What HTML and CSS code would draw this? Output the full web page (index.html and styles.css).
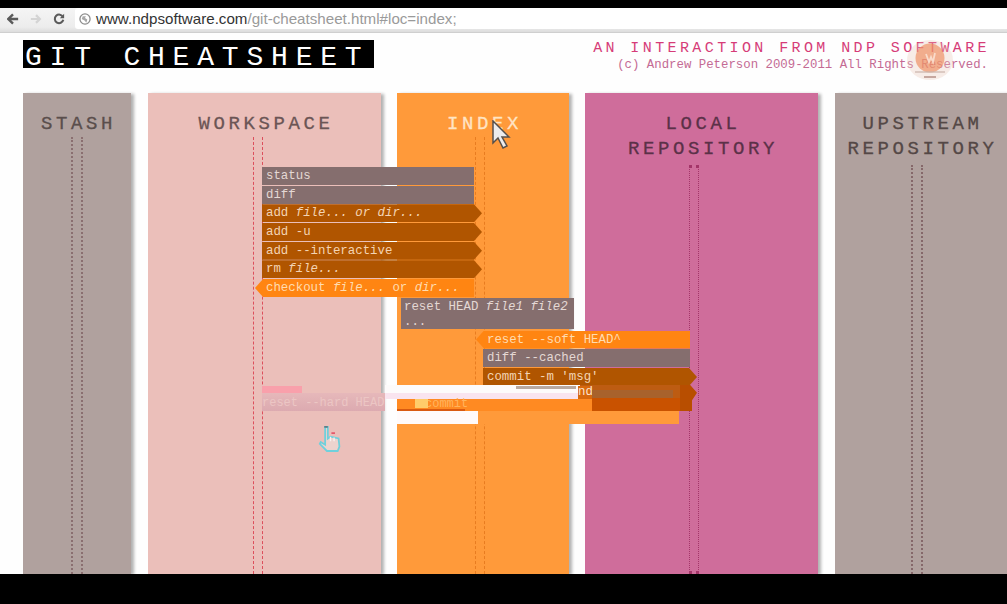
FILE: index.html
```html
<!doctype html>
<html lang="en">
    <head>
        <meta charset="UTF-8" />
        <meta name="viewport" content="width=device-width, initial-scale=1.0" />
        <title>Git Cheatsheet</title>
        <link rel="stylesheet" href="styles.css">
    </head>
    <body>
        <div class="screen">
            <div class="toolbar">
                <svg class="nav-icon" width="12" height="12" viewBox="0 0 14 14"><path d="M7 1.5 1.5 7 7 12.5M2 7h11" fill="none" stroke="#5a5a5a" stroke-width="2.8"/></svg>
                <svg class="nav-icon" width="12" height="12" viewBox="0 0 14 14"><path d="M7 2.5 11.5 7 7 11.500M1 7h10" fill="none" stroke="#d4d4d4" stroke-width="2.6"/></svg>
                <svg class="nav-icon" width="12" height="12" viewBox="0 0 14 14"><path d="M11.6 4.6A5 5 0 1 0 12 8" fill="none" stroke="#5a5a5a" stroke-width="2.4"/><path d="M13 1v5H8z" fill="#5a5a5a"/></svg>
                <div class="address">
                    <svg class="globe" width="12" height="12" viewBox="0 0 13 13"><circle cx="6.5" cy="6.5" r="5.5" fill="none" stroke="#8c8c8c" stroke-width="1.4"/><path d="M4 3.5h3.500l-1 2 2.500 1.500-1 3.500-2-2.500L3 6.500z" fill="#a8a8a8"/></svg>
                    <span class="domain">www.ndpsoftware.com</span><span class="path">/git-cheatsheet.html#loc=index;</span>
                </div>
            </div>

            <header class="page-head">
                <h1 class="logo">GIT CHEATSHEET</h1>
                <div class="credits">
                    <div class="tagline">AN INTERACTION FROM NDP SOFTWARE</div>
                    <div class="copyright">(c) Andrew Peterson 2009-2011 All Rights Reserved.</div>
                </div>
            </header>

            <main class="board">
                <section class="column stash">
                    <h2>STASH</h2>
                    <div class="lane"></div>
                </section>
                <section class="column workspace">
                    <h2>WORKSPACE</h2>
                    <div class="lane"></div>
                </section>
                <section class="column index">
                    <h2>INDEX</h2>
                    <div class="lane"></div>
                </section>
                <section class="column local">
                    <h2>LOCAL<br>REPOSITORY</h2>
                    <div class="lane"></div>
                </section>
                <section class="column upstream">
                    <h2>UPSTREAM<br>REPOSITORY</h2>
                    <div class="lane"></div>
                </section>

                <div class="commands">
                    <div class="cmd info span-work">status</div>
                    <div class="cmd info span-work">diff</div>
                    <div class="cmd push span-work">add <i>file... or dir...</i></div>
                    <div class="cmd push span-work">add -u</div>
                    <div class="cmd push span-work">add --interactive</div>
                    <div class="cmd push span-work">rm <i>file...</i></div>
                    <div class="cmd pull span-work">checkout <i>file...</i> or <i>dir...</i></div>
                    <div class="cmd info span-reset">reset HEAD <i>file1 file2</i> ...</div>
                    <div class="cmd pull span-index">reset --soft HEAD^</div>
                    <div class="cmd info span-index">diff --cached</div>
                    <div class="cmd push span-index">commit -m 'msg'</div>
                </div>
            </main>
        </div>

        <!-- torn frame from the video capture -->
        <div class="tear tear-pink"></div>
        <div class="tear tear-band">reset --hard HEAD</div>
        <div class="tear tear-white"></div>
        <div class="tear tear-grey"></div>
        <div class="tear tear-lilac"></div>
        <div class="tear tear-orange">commit</div>
        <div class="tear tear-red"></div>
        <div class="tear tear-yellow"></div>
        <div class="tear tear-gap"></div>
        <div class="tear tear-light"></div>
        <div class="tear tear-shade"></div>
        <div class="tear tear-dark"></div>
        <div class="tear tear-nd">nd</div>
        <div class="tear tear-brown"></div>
        <div class="tear tear-tip"></div>

        <svg class="watermark" width="50" height="48" viewBox="0 0 50 48">
            <ellipse cx="25" cy="23" rx="23" ry="20" fill="#e8c4b4" opacity="0.3"/>
            <circle cx="25" cy="21" r="14.500" fill="#ee8c5c" opacity="0.65"/>
            <path d="M21 17l3 8 2-5 2 5 2-9" fill="none" stroke="#fbe6da" stroke-width="1.800" opacity="0.8"/>
            <rect x="10" y="34" width="30" height="2" fill="#c9b4ac" opacity="0.6"/>
            <rect x="19" y="39" width="12" height="2" fill="#b08a80" opacity="0.7"/>
        </svg>

        <svg class="cursor-arrow" width="20" height="30" viewBox="0 0 20 30">
            <path d="M2 1v22l5-5 5 10 4-2-5-9h7z" fill="#ececec" stroke="#55504c" stroke-width="1.500"/>
        </svg>

        <svg class="cursor-hand" width="25" height="29" viewBox="0 0 28 32">
            <path d="M8 3h3v13l3-2 9 2 1 9-2 5H10l-8-8 1-2 5 3z" fill="#edd3ce" stroke="#6fd0dc" stroke-width="2"/>
            <path d="M7 2h4v2H7z" fill="#5d7f88"/>
            <path d="M15 9h4v2h-4z" fill="#e4576a"/>
            <path d="M14 14v5M18 15v4" stroke="#f8f2f0" stroke-width="1.500"/>
        </svg>
    </body>
</html>
```

FILE: styles.css
```css
html,
body {
    height: 100%;
    margin: 0;
    background: #000;
    overflow: hidden;
}
.screen {
    display: flex;
    flex-direction: column;
    height: 566px;
    margin-top: 8px;
    background: #fefefe;
    overflow: hidden;
}

/* browser chrome */
.toolbar {
    display: flex;
    align-items: flex-start;
    flex: none;
    height: 25px;
    box-sizing: border-box;
    padding-left: 7px;
    background: linear-gradient(#f5f5f5, #ececec 80%, #dcdcdc);
    border-bottom: 1px solid #cfcfcf;
}
.nav-icon {
    flex: none;
    margin: 5px 11px 0 0;
}
.address {
    display: flex;
    align-items: center;
    flex: 1;
    height: 21px;
    margin-left: -1px;
    padding-left: 4px;
    background: #fff;
    border-radius: 3px 0 0 3px;
    font-family: "Liberation Sans", Arial, sans-serif;
    font-size: 15.15px;
    white-space: nowrap;
}
.globe {
    flex: none;
    margin-right: 5px;
}
.domain {
    color: #333;
}
.path {
    color: #9a9a9a;
}

/* page header */
.page-head {
    display: flex;
    justify-content: space-between;
    flex: none;
    height: 60px;
    box-sizing: border-box;
    padding: 7px 19px 0 23px;
}
.logo {
    width: 351px;
    height: 28px;
    box-sizing: border-box;
    margin: 0;
    padding-left: 2px;
    background: #000;
    color: #fff;
    font-family: "Liberation Mono", monospace;
    font-size: 28px;
    font-weight: normal;
    line-height: 35px;
    letter-spacing: 7.8px;
    white-space: pre;
}
.credits {
    text-align: right;
    font-family: "Liberation Mono", monospace;
}
.tagline {
    color: #d63c78;
    font-size: 15px;
    line-height: 17px;
    letter-spacing: 3.4px;
    margin-right: -2px;
}
.copyright {
    color: #c46a94;
    font-size: 12.37px;
    line-height: 16px;
}

/* columns */
.board {
    position: relative;
    display: flex;
    flex: 1;
    min-height: 0;
    padding-left: 23px;
}
.column {
    display: flex;
    flex-direction: column;
    flex: none;
    box-shadow: 3px 1px 3px rgba(0, 0, 0, 0.3);
}
.column h2 {
    margin: 0;
    padding: 19px 0 0 3px;
    text-align: center;
    font-family: "Liberation Mono", monospace;
    font-size: 19px;
    font-weight: normal;
    line-height: 25px;
    letter-spacing: 3.6px;
    -webkit-text-stroke: 0.3px currentColor;
}
.lane {
    flex: 1;
    width: 8px;
    border-left: 1px dashed;
    border-right: 1px dashed;
}
.stash {
    width: 108px;
    background: #b0a19e;
    color: #5a4e4c;
}
.workspace {
    width: 233px;
    margin-left: 17px;
    background: #ebbfba;
    color: #6b5555;
}
.index {
    width: 172px;
    margin-left: 16px;
    background: #ff9a3a;
    color: #ffe4c4;
}
.local {
    width: 233px;
    margin-left: 16px;
    background: #cf6d9b;
    color: #5b3148;
}
.upstream {
    width: 172px;
    margin-left: 17px;
    background: #b0a19e;
    color: #544846;
}
.local h2,
.upstream h2 {
    padding-bottom: 3px;
}
.stash .lane {
    margin-left: 48px;
    border-style: dotted;
    border-width: 0 2px;
    color: #8a6f70;
}
.workspace .lane {
    margin-left: 105px;
    color: #dc4f5c;
}
.index .lane {
    margin-left: 78px;
    color: #e87c20;
}
.local .lane {
    margin-left: 104px;
    border-style: dotted;
    color: #a33568;
}
.upstream .lane {
    margin-left: 76px;
    border-style: dotted;
    border-width: 0 2px;
    color: #85686a;
}

/* command rows laid over the columns */
.commands {
    position: absolute;
    top: 74px;
    left: 0;
    right: 0;
    font-family: "Liberation Mono", monospace;
    font-size: 12.4px;
    line-height: 19px;
}
.cmd {
    box-sizing: border-box;
    height: 18px;
    margin-bottom: 0.67px;
    padding: 0 4px;
}
.cmd i {
    font-style: italic;
}
.info {
    background: #856e6e;
    color: #e4d8d4;
}
.push {
    background: #b05500;
    color: #f4d4b4;
    clip-path: polygon(0 0, calc(100% - 8px) 0, 100% 50%, calc(100% - 8px) 100%, 0 100%);
}
.pull {
    background: #ff8512;
    color: #ffdcb0;
    clip-path: polygon(8px 0, 100% 0, 100% 100%, 8px 100%, 0 50%);
}
.span-work {
    width: 212px;
    margin-left: 262px;
}
.span-work.push {
    width: 220px;
}
.span-work.pull {
    width: 219px;
    margin-left: 255px;
    padding-left: 11px;
}
.span-reset {
    width: 173px;
    height: 31px;
    margin-left: 401px;
    margin-bottom: 2px;
    padding-left: 3px;
    padding-top: 2px;
    line-height: 15px;
}
.span-index {
    width: 207px;
    margin-left: 483px;
}
.span-index.push {
    width: 214px;
}
.span-index.pull {
    width: 214px;
    margin-left: 476px;
    padding-left: 11px;
}

/* capture artifacts, placed where the video frame tore */
.tear {
    position: absolute;
}
.tear-pink {
    left: 262px;
    top: 386px;
    width: 40px;
    height: 8px;
    background: #f9a0ab;
}
.tear-band {
    left: 262px;
    top: 393px;
    width: 123px;
    height: 18px;
    background: linear-gradient(#e6b8ba, #dcaab0);
    color: #ecc6c4;
    font-family: "Liberation Mono", monospace;
    font-size: 12px;
    line-height: 20px;
    white-space: nowrap;
}
.tear-white {
    left: 385px;
    top: 385px;
    width: 195px;
    height: 8px;
    background: #fdfbfb;
}
.tear-grey {
    left: 516px;
    top: 386px;
    width: 60px;
    height: 3px;
    background: #b9a9a0;
}
.tear-lilac {
    left: 385px;
    top: 393px;
    width: 193px;
    height: 6px;
    background: #f9e4ef;
}
.tear-orange {
    left: 397px;
    top: 399px;
    width: 200px;
    height: 12px;
    box-sizing: border-box;
    padding-left: 28px;
    background: #ff8a22;
    color: #ffb45c;
    font-family: "Liberation Mono", monospace;
    font-size: 12px;
    line-height: 10px;
}
.tear-red {
    left: 397px;
    top: 409px;
    width: 68px;
    height: 2px;
    background: #d95a10;
}
.tear-yellow {
    left: 415px;
    top: 399px;
    width: 13px;
    height: 9px;
    background: #ffcc6a;
}
.tear-gap {
    left: 397px;
    top: 411px;
    width: 81px;
    height: 13px;
    background: #fffafa;
}
.tear-light {
    left: 478px;
    top: 411px;
    width: 201px;
    height: 13px;
    background: #ff9a3a;
}
.tear-shade {
    left: 580px;
    top: 385px;
    width: 100px;
    height: 14px;
    background: #bd5c12;
}
.tear-dark {
    left: 592px;
    top: 398px;
    width: 100px;
    height: 13px;
    background: #c95200;
}
.tear-nd {
    left: 578px;
    top: 386px;
    width: 14px;
    height: 13px;
    background: #d8680c;
    color: #fbe3cc;
    font-family: "Liberation Mono", monospace;
    font-size: 12.4px;
    line-height: 12px;
}
.tear-brown {
    left: 592px;
    top: 390px;
    width: 81px;
    height: 8px;
    background: #a8622c;
}
.tear-tip {
    left: 680px;
    top: 385px;
    width: 17px;
    height: 26px;
    background: #b84e00;
    clip-path: polygon(0 0, 60% 0, 100% 30%, 70% 60%, 70% 100%, 0 100%);
}

/* things lying over the page */
.watermark {
    position: absolute;
    left: 905px;
    top: 37px;
}
.cursor-arrow {
    position: absolute;
    left: 491px;
    top: 120px;
}
.cursor-hand {
    position: absolute;
    left: 318px;
    top: 424px;
}
```
